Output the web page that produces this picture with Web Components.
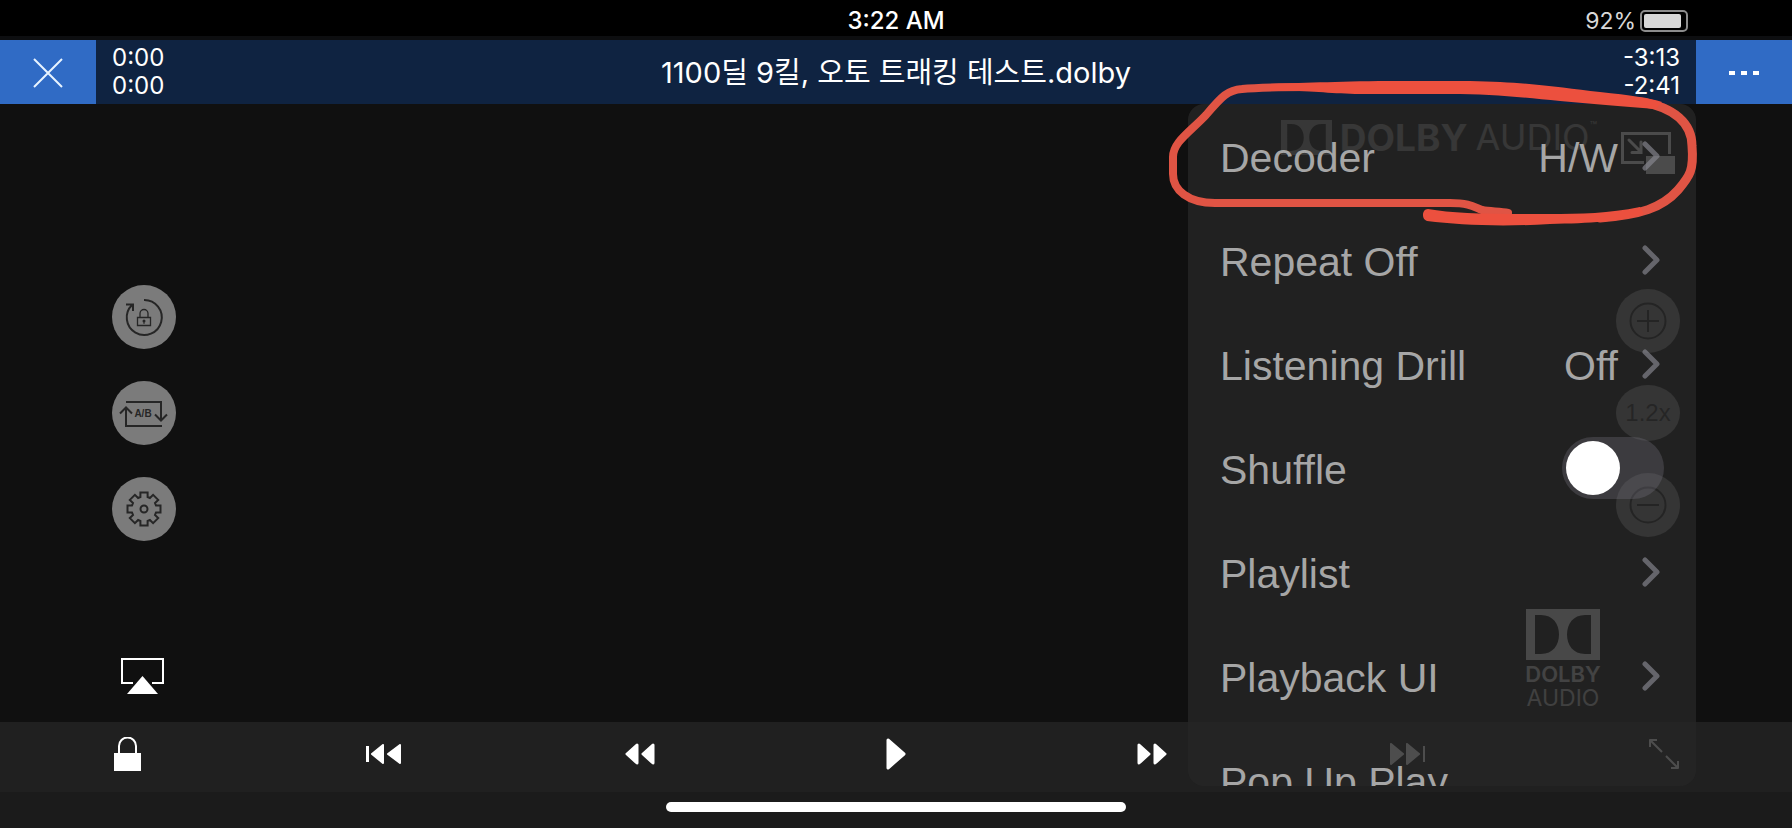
<!DOCTYPE html>
<html lang="en">
<head>
<meta charset="utf-8">
<title>Player</title>
<style>
  html, body { margin: 0; height: 100%; background: #101010; }
  body { font-family: Inter, "Noto Sans CJK KR", sans-serif; color: #fff; }
</style>
</head>
<body>
<player-app></player-app>

<script>
const define = (name, html, setup) => {
  const tpl = document.createElement('template');
  tpl.innerHTML = html;
  customElements.define(name, class extends HTMLElement {
    constructor() {
      super();
      this.attachShadow({ mode: 'open' }).append(tpl.content.cloneNode(true));
    }
    connectedCallback() { if (setup) setup(this, this.shadowRoot); }
  });
};

const RESET = `button { all: unset; box-sizing: border-box; cursor: pointer; } svg { display: block; }`;

/* Outline of a cog with eight flat teeth. */
const gearPath = (cx, cy) => {
  const pts = [];
  for (let i = 0; i < 8; i++) {
    const a = i * Math.PI / 4;
    for (const [x, y] of [[-3.6, -12], [-3.6, -16.5], [3.6, -16.5], [3.6, -12]]) {
      pts.push((cx + x * Math.cos(a) - y * Math.sin(a)).toFixed(1) + ' ' + (cy + x * Math.sin(a) + y * Math.cos(a)).toFixed(1));
    }
  }
  return 'M' + pts.join('L') + 'Z';
};

define('status-bar', `
<style>
  :host { display: grid; grid-template-columns: 1fr auto 1fr; align-items: center; height: 36px; background: #000; border-bottom: 4px solid #0d0e10; padding: 0 104px; font-size: 24px; line-height: 30px; }
  time { font-weight: 500; padding-top: 6px; }
  .power { display: flex; justify-content: flex-end; align-items: center; gap: 4px; color: #d8d8d8; padding-top: 6px; font-size: 23px; }
</style>
<span></span><time>3:22 AM</time>
<div class="power"><span>92%</span>
  <svg width="48" height="22" viewBox="0 0 48 22" aria-hidden="true"><rect x="1" y="1" width="46" height="20" rx="4" fill="none" stroke="#8c8c8c" stroke-width="2"/><rect x="4" y="4" width="37" height="14" rx="2" fill="#d8d8d8"/></svg>
</div>`);

define('title-bar', `
<style>
  ${RESET}
  :host { display: grid; grid-template-columns: 96px 1fr auto 1fr 96px; height: 64px; background: #0f2341; }
  button { background: #306bc5; display: grid; place-items: center; }
  .times { font-size: 24px; line-height: 28px; padding: 4px 16px; }
  .left { text-align: right; }
  h1 { margin: 0; font-size: 29px; line-height: 66px; font-weight: 400; white-space: nowrap; }
</style>
<button aria-label="Close"><svg width="30" height="30" viewBox="0 0 30 30"><path d="M1 1 29 29M29 1 1 29" stroke="#e8f4ff" stroke-width="2"/></svg></button>
<div class="times"><div>0:00</div><div>0:00</div></div>
<h1><slot></slot></h1>
<div class="times left"><div>-3:13</div><div>-2:41</div></div>
<button aria-label="More"><svg width="30" height="6" viewBox="0 0 30 6"><path d="M0 1h6v4H0zM12 1h6v4h-6zM24 1h6v4h-6z" fill="#fff"/></svg></button>`);

define('round-button', `
<style>
  ${RESET}
  :host { display: block; }
  button { display: grid; place-items: center; width: 64px; height: 64px; border-radius: 32px; background: #7b7b7b; color: #262626; font-size: 24px; font-family: "Liberation Sans", sans-serif; }
  :host([flat]) button { height: 56px; border-radius: 32px / 28px; }
  ::slotted(svg) { display: block; }
</style>
<button><slot></slot></button>`, (host, root) => root.querySelector('button').setAttribute('aria-label', host.getAttribute('label')));

const dolbyMark = (w, h, color) => `<svg width="${w}" height="${h}" viewBox="0 0 74 51" preserveAspectRatio="none" aria-hidden="true"><path fill="${color}" fill-rule="evenodd" d="M0 0H74V51H0ZM9 6V45H15C27 45 33 36 33 25.500C33 15 27 6 15 6ZM65 6H59C47 6 41 15 41 25.500C41 36 47 45 59 45H65Z"/></svg>`;

define('dolby-wide', `
<style>
  ${RESET}
  :host { display: flex; align-items: flex-start; gap: 8px; color: #858585; font-size: 37px; line-height: 35px; white-space: nowrap; }
  b { font-weight: 700; } span { font-size: 36px; font-weight: 400; } sup { font-size: 12px; line-height: 12px; margin-left: -8px; }
</style>
${dolbyMark(51, 35, '#858585')}<b>DOLBY</b><span>AUDIO</span><sup>™</sup>`);

define('dolby-stack', `
<style>
  ${RESET}
  :host { display: flex; flex-direction: column; align-items: center; width: 74px; color: #c8c8c8; font-size: 22px; line-height: 24px; }
  b { font-weight: 600; margin-top: 2px; } span { font-size: 23px; font-weight: 400; color: #b4b4b4; }
</style>
${dolbyMark(74, 51, '#e4e4e4')}<b>DOLBY</b><span>AUDIO</span>`);

define('video-stage', `
<style>
  ${RESET}
  :host { display: grid; grid-template-rows: 1fr auto 1fr; min-height: 0; background: #101010; }
  .row { display: flex; justify-content: space-between; align-items: center; padding: 0 112px; }
  .top { justify-content: flex-end; align-items: flex-start; gap: 24px; padding: 16px 117px 0; }
  .top button { margin-top: 12px; }
  .bottom { align-items: flex-end; padding: 0 192px 12px 121px; }
  .bottom button { padding-bottom: 16px; }
  .stack { display: grid; gap: 32px; }
</style>
<div class="row top">
  <dolby-wide></dolby-wide>
  <button aria-label="Picture in picture"><svg width="54" height="42" viewBox="0 0 54 42"><path d="M48.500 22V1.500H1.500V30.500H23" fill="none" stroke="#f2f2f2" stroke-width="3"/><path d="M25 24H54V42H25Z" fill="#f2f2f2"/><path d="M8 8 20 20M20 10V20.500H11" fill="none" stroke="#f2f2f2" stroke-width="3" stroke-linecap="round"/></svg></button>
</div>
<div class="row">
  <div class="stack">
    <round-button label="Lock rotation"><svg width="64" height="64" viewBox="0 0 64 64" fill="none" stroke="#262626" stroke-width="2"><path d="M32 15A17.500 17.500 0 1 1 20 20M14 19.500H21V26"/><path d="M25.500 32.500H38.500V40.500H25.500ZM28 32V28.500A4 4 0 0 1 36 28.500V32" stroke-width="1.300"/><circle cx="32" cy="36" r="1.500" fill="#262626" stroke="none"/><path d="M32 36V39" stroke-width="1"/></svg></round-button>
    <round-button label="A/B repeat"><svg width="64" height="64" viewBox="0 0 64 64" fill="none" stroke="#262626" stroke-width="2"><path d="M14 21H49V39M43 33.500 49 39.500 55 33.500M50 45H14V27M8 32.500 14 26.500 20 32.500"/><text x="31" y="36" text-anchor="middle" font-family="Liberation Sans, sans-serif" font-size="10" font-weight="700" fill="#262626" stroke="none">A/B</text></svg></round-button>
    <round-button label="Settings"><svg width="64" height="64" viewBox="0 0 64 64" fill="none" stroke="#262626" stroke-width="2"><path d="${gearPath(32, 32)}"/><circle cx="32" cy="32" r="3.500"/></svg></round-button>
  </div>
  <div class="stack">
    <round-button label="Faster"><svg width="64" height="64" viewBox="0 0 64 64" fill="none" stroke="#1c1c1c" stroke-width="2"><circle cx="32" cy="32" r="17.500"/><path d="M21 32H43M32 21V43"/></svg></round-button>
    <round-button flat label="Speed 1.2x">1.2x</round-button>
    <round-button label="Slower"><svg width="64" height="64" viewBox="0 0 64 64" fill="none" stroke="#1c1c1c" stroke-width="2"><circle cx="32" cy="32" r="17.500"/><path d="M21 32H43"/></svg></round-button>
  </div>
</div>
<div class="row bottom">
  <button aria-label="AirPlay"><svg width="43" height="36" viewBox="0 0 43 36"><path d="M12 25H1V1H42V25H31" fill="none" stroke="#fff" stroke-width="2"/><path d="M21.500 18 37 36H6Z" fill="#fff"/></svg></button>
  <dolby-stack></dolby-stack>
</div>`);

define('transport-bar', `
<style>
  ${RESET}
  :host { display: grid; grid-template-columns: repeat(7, 1fr); height: 64px; padding-bottom: 6px; background: #202020; }
  button { display: grid; place-items: center; }
  svg { fill: #fff; stroke: #fff; stroke-width: 2; stroke-linejoin: round; }
</style>
<button aria-label="Lock"><svg width="28" height="34" viewBox="0 0 28 34"><path stroke="none" d="M0 16H27V34H0Z"/><path fill="none" d="M5 17V9A8.500 8.500 0 0 1 22 9V17"/></svg></button>
<button aria-label="Previous"><svg width="36" height="20" viewBox="0 0 36 20"><path stroke="none" d="M0 2H3V18H0Z"/><path d="M6 10 17 1V19ZM22 10 34 1V19Z"/></svg></button>
<button aria-label="Rewind"><svg width="30" height="22" viewBox="0 0 30 22"><path d="M2 11 12 2V20ZM18 11 28 2V20Z" stroke-width="3"/></svg></button>
<button aria-label="Play"><svg width="20" height="34" viewBox="0 0 20 34"><path d="M2 3 18 17 2 31Z" stroke-width="3"/></svg></button>
<button aria-label="Fast forward"><svg width="30" height="22" viewBox="0 0 30 22"><path d="M28 11 18 2V20ZM12 11 2 2V20Z" stroke-width="3"/></svg></button>
<button aria-label="Next"><svg width="36" height="22" viewBox="0 0 36 22"><path stroke="none" d="M33 3H35V19H33Z"/><path d="M29 11 17 1V21ZM13 11 1 1V21Z"/></svg></button>
<button aria-label="Full screen"><svg width="30" height="30" viewBox="0 0 30 30"><path fill="none" d="M8 1H1V8M1 1 13 13M17 17 29 29M22 29H29V22"/></svg></button>`);

define('home-indicator', `
<style>
  :host { display: flex; justify-content: center; height: 26px; padding-top: 10px; background: #1b1b1b; }
  i { width: 460px; height: 10px; border-radius: 5px; background: #fff; }
</style><i></i>`);

define('menu-row', `
<style>
  ${RESET}
  :host { display: block; }
  button { display: flex; align-items: center; width: 100%; height: 104px; padding: 0 36px 0 32px; gap: 24px; }
  .label { flex: 1; padding-top: 4px; }
  .value { padding-top: 4px; }
  :host([plain]) svg { display: none; }
</style>
<button><span class="label"><slot></slot></span><span class="value"><slot name="value"></slot></span>
<svg width="18" height="30" viewBox="0 0 18 30"><path d="M3 3 15 15 3 27" fill="none" stroke="#8a8a94" stroke-opacity=".65" stroke-width="5" stroke-linecap="round" stroke-linejoin="round"/></svg></button>`);

define('menu-switch', `
<style>
  :host { display: block; }
  label { display: flex; align-items: center; justify-content: space-between; height: 104px; padding: 0 32px; }
  span { padding-top: 4px; }
  input { appearance: none; margin: 0; width: 102px; height: 62px; padding: 4px; border-radius: 31px; background: rgba(118, 116, 128, .32); }
  input::before { content: ""; display: block; width: 54px; height: 54px; border-radius: 50%; background: #fff; }
  input:checked::before { margin-left: auto; }
</style>
<label><span><slot></slot></span><input type="checkbox" role="switch"></label>`);

define('options-menu', `
<style>
  :host { display: block; overflow: hidden; border-radius: 16px; background: rgba(38, 38, 38, .82); color: #a6a6a6; font-family: "Liberation Sans", sans-serif; font-size: 41px; line-height: 48px; white-space: nowrap; }
</style>
<menu-row>Decoder<span slot="value">H/W</span></menu-row>
<menu-row>Repeat Off</menu-row>
<menu-row>Listening Drill<span slot="value">Off</span></menu-row>
<menu-switch>Shuffle</menu-switch>
<menu-row>Playlist</menu-row>
<menu-row>Playback UI</menu-row>
<menu-row plain>Pop Up Play</menu-row>`);

/* Hand-drawn marker loop: a thin stroke, plus filled swells where the pen pressed harder. */
define('marker-loop', `
<style>:host { display: block; pointer-events: none; } svg { display: block; }</style>
<svg width="540" height="150" viewBox="1164 76 540 150" aria-hidden="true">
  <g fill="none" stroke="#e05444" stroke-linecap="round" stroke-linejoin="round">
    <path stroke-width="8" d="M1508 213C1500 211 1490 212 1482 210C1474 207 1470 203 1450 203H1215C1188 203 1173 190 1173 174V157C1173 142 1190 132 1206 115C1222 96 1228 90 1242 89C1260 87 1280 87 1310 87"/>
    <path stroke-width="9" d="M1640 102C1675 107 1692 124 1692 146C1694 170 1690 176 1678 190C1662 208 1640 215 1600 218"/>
  </g>
  <path fill="#ec503e" d="M1270 84C1310 83 1340 81 1400 81H1470C1530 82 1560 88 1600 92C1630 95 1650 98 1662 102L1656 109C1620 106 1590 104 1560 101C1520 97 1490 94 1450 94H1360C1330 94 1310 90 1270 91Z"/>
  <path fill="#ec503e" d="M1428 209C1450 213 1480 214 1520 214C1570 214 1600 215 1640 207L1644 214C1620 222 1590 223 1550 224C1500 227 1460 225 1427 221C1421 219 1422 209 1428 209Z"/>
</svg>`);

define('player-app', `
<style>
  :host { display: grid; grid-template-rows: auto auto 1fr; height: 100vh; min-height: 720px; position: relative; overflow: hidden; }
  main { display: grid; grid-template-rows: 1fr auto auto; position: relative; min-height: 0; }
  options-menu { position: absolute; top: 0; right: 96px; bottom: 42px; width: 508px; }
  marker-loop { position: absolute; top: 76px; right: 88px; }
</style>
<status-bar></status-bar>
<title-bar>1100딜 9킬, 오토 트래킹 테스트.dolby</title-bar>
<main>
  <video-stage></video-stage>
  <transport-bar></transport-bar>
  <home-indicator></home-indicator>
  <options-menu></options-menu>
</main>
<marker-loop></marker-loop>`);
</script>
</body>
</html>
